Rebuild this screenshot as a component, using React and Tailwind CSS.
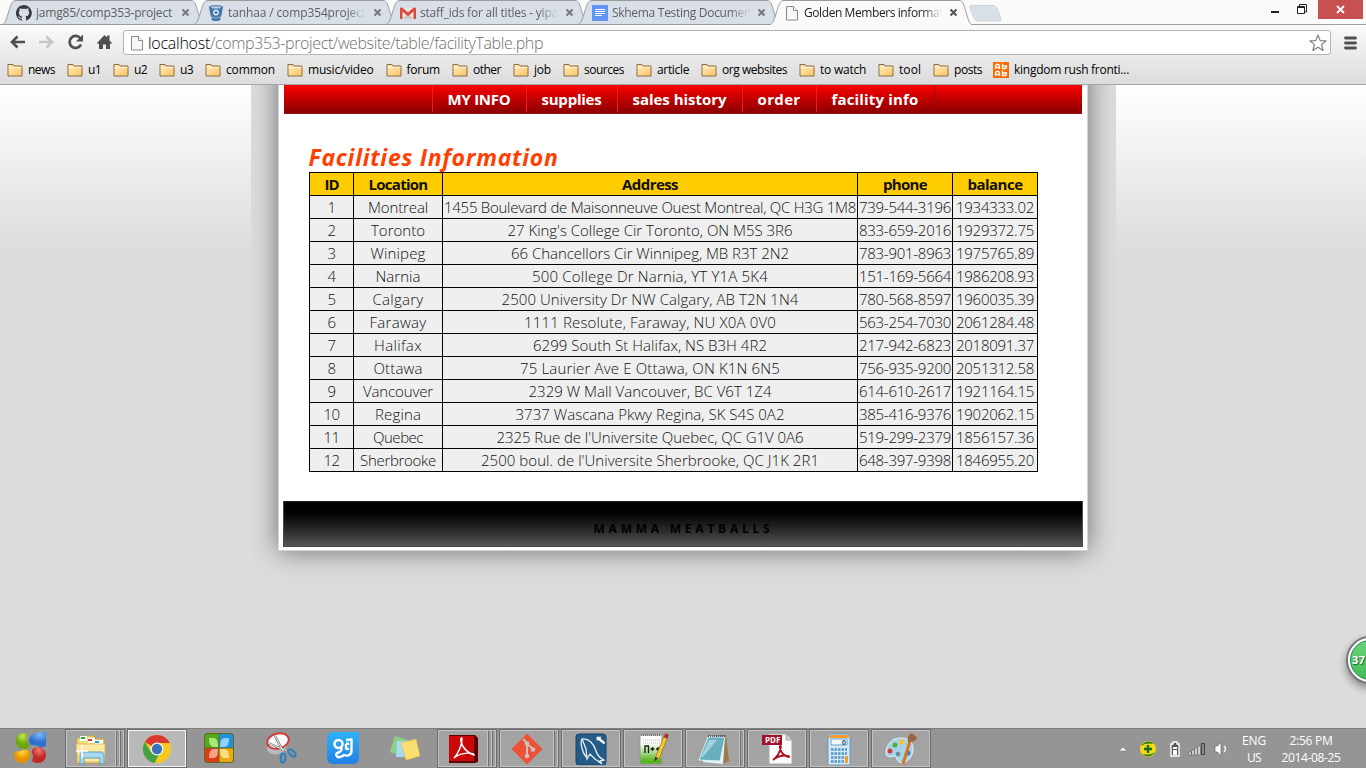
import React, { useLayoutEffect, useRef } from "react";

/* Text run tracked so that it fills a given advance width. */
function Fit({ w, className = "", children }) {
  const ref = useRef(null);
  useLayoutEffect(() => {
    const el = ref.current;
    el.style.letterSpacing = "0px";
    const natural = el.getBoundingClientRect().width;
    el.style.letterSpacing = (w - natural) / el.textContent.length + "px";
  }, [w, children]);
  return <span ref={ref} className={"inline-block whitespace-pre " + className}>{children}</span>;
}

/* ---------- browser icons ---------- */
const Github = () => (
  <svg className="size-4" viewBox="0 0 16 16"><path fill="#3a3a3c" d="M8 0C3.6 0 0 3.6 0 8c0 3.500 2.300 6.500 5.500 7.600.4.1.5-.2.5-.4v-1.400c-2.200.5-2.700-1-2.700-1-.4-.9-.9-1.200-.9-1.200-.7-.5.1-.5.1-.5.800.1 1.200.8 1.200.8.700 1.200 1.900.9 2.300.7.100-.5.300-.9.500-1.100-1.800-.2-3.600-.9-3.600-4 0-.9.300-1.600.8-2.100-.1-.2-.4-1 .1-2.100 0 0 .7-.2 2.200.8a7.500 7.500 0 0 1 4 0c1.500-1 2.200-.8 2.200-.8.400 1.100.2 1.900.1 2.100.5.600.8 1.300.8 2.100 0 3.100-1.900 3.700-3.700 3.900.3.300.6.800.6 1.500v2.200c0 .2.100.5.6.4A8 8 0 0 0 8 0z" /></svg>
);
const Bucket = () => (
  <svg className="size-4" viewBox="0 0 16 16"><path fill="#4377ac" d="M1 2.500C1 1 4 .3 8 .3s7 .7 7 2.200l-1.700 8.300C13 12 11 12.800 8 12.800S3 12 2.700 10.800z" /><path fill="#4377ac" d="M3.200 12.300c2.500 1.400 7.100 1.400 9.600 0l-.6 2.500c-.3.8-2 1.200-4.200 1.200s-3.900-.4-4.200-1.200z" /><ellipse cx="8" cy="2.400" rx="5" ry="1.100" fill="#b9cde0" /><circle cx="8" cy="7.500" r="2.900" fill="#e4edf5" /><circle cx="8" cy="7.500" r="1.500" fill="#4377ac" /></svg>
);
const Gmail = () => (
  <svg className="size-4" viewBox="0 0 16 16"><path fill="#e8e6e2" d="M1 3h14v11H1z" /><path fill="#cfcac0" d="m2.500 14 5.500-6 5.500 6z" /><path fill="#dc4a3d" d="M1 2.500c-.8.300-1 1-1 1.500v9c0 .6.400 1 1 1h1.500V6.600L8 11.200l5.500-4.600V14H15c.6 0 1-.4 1-1V4c0-.500-.2-1.200-1-1.500-.6-.2-1.200 0-1.500.3L8 7.500 2.500 2.800C2.200 2.500 1.600 2.300 1 2.500z" /></svg>
);
const Doc = () => (
  <svg className="size-4" viewBox="0 0 16 16"><rect width="16" height="16" rx="1" fill="#5f95f3" /><path stroke="#fff" d="M3 4.500h10M3 6.500h10M3 8.500h10M3 10.500h7" /></svg>
);
const Page = () => (
  <svg className="size-4" viewBox="0 0 16 16"><path fill="#f7f7f7" stroke="#8a8a8a" d="M2.500 1.500h7l4 4v9.500h-11z" /><path fill="#fff" stroke="#8a8a8a" d="M9.500 1.500v4h4" /></svg>
);

function Tab({ active, Icon, title, w, first }) {
  return (
    <div className={"relative h-[25px] w-[192px] shrink-0 " + (active ? "z-10" : "")}>
      <svg className="absolute left-0 top-0 h-[25px] w-[204px]" viewBox="0 0 204 25">
        <path d="M1 24.500C4 24 5 20 7 14S10 1.500 14 .5h176c4 0 5 5 7 11.500s3 12 6 12.500z" fill={active ? "#fafafa" : "#d9dfe7"} stroke="#9b9b9b" />
        {active && <path d="M2 24.500h200" stroke="#fafafa" strokeWidth="1.500" />}
      </svg>
      <div className="relative flex h-[25px] items-center pl-[15px]">
        <Icon />
        <div className={"ml-1 w-[140px] overflow-hidden text-[12px] leading-5 " + (first ? "" : "[mask-image:linear-gradient(to_right,#000_118px,transparent_138px)] ") + (active ? "text-[#222]" : "text-[#5c5f63]")}>
          <Fit w={w}>{title}</Fit>
        </div>
        <svg className="ml-[5px] size-[9px]" viewBox="0 0 9 9"><path d="m1.500 1.500 6 6m0-6-6 6" stroke={active ? "#555" : "#777"} strokeWidth="2" /></svg>
      </div>
    </div>
  );
}

function TabStrip() {
  return (
    <div className="relative flex h-[25px] bg-[#fafafa]">
      <div className="absolute bottom-0 h-px w-full bg-[#a0a0a0]" />
      <div className="flex pl-[1px]">
        <Tab Icon={Github} title="jamg85/comp353-project" w={136} first />
        <Tab Icon={Bucket} title="tanhaa / comp354project" w={138} />
        <Tab Icon={Gmail} title="staff_ids for all titles - yipa" w={138} />
        <Tab Icon={Doc} title="Skhema Testing Documen" w={139} />
        <Tab Icon={Page} title="Golden Members informat" w={139} active />
      </div>
      <svg className="mt-1 ml-[6px] h-[18px] w-[36px]" viewBox="0 0 36 18"><path d="M4 1.500h22c2 0 3 1 4 3l4 10c.6 1.600 0 2.500-2 2.500H11c-2 0-3-1-4-3L3 4c-.5-1.500-.5-2.500 1-2.500z" fill="#d9dfe7" stroke="#d0d3d8" /></svg>
      <div className="ml-auto flex h-[19px] items-stretch">
        <svg className="mr-[8px] h-[19px] w-[40px]" viewBox="0 0 40 19"><path d="M1 12h8" stroke="#222" strokeWidth="2" /><path d="M27.500 6.500h7v7h-7zM27 7.500h8M29.500 6V4.500h7v7.500H35" fill="none" stroke="#222" /></svg>
        <div className="flex w-[45px] items-center justify-center bg-[#c75050]">
          <svg className="size-[9px]" viewBox="0 0 9 9"><path d="m1 1 7 7m0-7L1 8" stroke="#fff" strokeWidth="1.800" /></svg>
        </div>
        <div className="w-[3px]" />
      </div>
    </div>
  );
}

function AddressBar() {
  return (
    <div className="flex h-[32px] items-center pt-[3px]">
      <svg className="-mt-px h-[20px] w-[123px] shrink-0" viewBox="0 0 123 20">
        <path d="M25 10H12m5.500-5.500L12 10l5.500 5.500" fill="none" stroke="#505050" strokeWidth="2.600" />
        <path d="M39 10h13m-5.500-5.500L52 10l-5.500 5.500" fill="none" stroke="#c6c6c6" strokeWidth="2.600" />
        <path d="M80.500 6.500A6 6 0 1 0 81 12.500" fill="none" stroke="#505050" strokeWidth="2.700" /><path d="M83 2.500v7h-7z" fill="#505050" />
        <path fill="#505050" d="m97 11 7.500-8 2.500 2.600V3.500h2.500v5L112 11l-1 1-1-.8V17h-4v-4.500h-3V17h-4v-5.800l-1 .8z" />
      </svg>
      <div className="flex h-[25px] w-[1208px] items-center rounded-[3px] border border-[#b4b4b4] bg-white pl-[5px]">
        <Page />
        <div className="ml-[3px] text-[16px] leading-6 font-light text-[#707070]">
          <Fit w={62} className="text-black">localhost</Fit><Fit w={333}>/comp353-project/website/table/facilityTable.php</Fit>
        </div>
        <svg className="mr-[3px] ml-auto size-[18px]" viewBox="0 0 18 18"><path d="m9 1 2.200 5.600 5.900.3-4.600 3.700 1.600 5.900L9 13.300l-5.100 3.200 1.600-5.900L.9 6.900l5.900-.3z" fill="#fff" stroke="#777" strokeWidth="1.100" strokeLinejoin="round" /></svg>
      </div>
      <svg className="ml-[13px] h-[14px] w-[13px]" viewBox="0 0 13 14"><path d="M1.500 2h10m-10 5h10m-10 5h10" stroke="#505050" strokeWidth="2.800" strokeLinecap="round" /></svg>
    </div>
  );
}

const Folder = () => (
  <svg className="h-[14px] w-4" viewBox="0 0 16 14">
    <defs><linearGradient id="fold" x2="1" y2="1"><stop stopColor="#ffedbd" /><stop offset="1" stopColor="#fbc567" /></linearGradient></defs>
    <path d="M1 3V1.500h5L7 3h8v10H1z" fill="url(#fold)" stroke="#8d6b42" strokeLinejoin="round" /><path d="M1.500 4.500h13" stroke="#fff3cf" />
  </svg>
);
const bookmarks = [["news", 27], ["u1", 13], ["u2", 13], ["u3", 13], ["common", 49], ["music/video", 65.5], ["forum", 33.5], ["other", 28], ["job", 17], ["sources", 40], ["article", 32], ["org websites", 65], ["to watch", 46], ["tool", 22], ["posts", 28]];

function Bookmarks() {
  return (
    <div className="flex h-[25px] items-center gap-3 pl-[7px] text-[12px] leading-4 text-black">
      {bookmarks.map(([name, w]) => (
        <div key={name} className="flex items-center gap-[5px]"><Folder /><Fit w={w}>{name}</Fit></div>
      ))}
      <div className="-ml-px flex items-center gap-[5px]">
        <svg className="size-4" viewBox="0 0 16 16"><rect width="16" height="16" fill="#fd6a02" /><path d="M2.500 7V3.500l1-1h2l1 1V7M3 5.500h3M9.500 1.500V6.500h3l1-1V4h-4M2.500 14v-3.500l1-1h2l1 1V14M3 12.500h3M9.500 8.500v5h3l1-1V11h-4" fill="none" stroke="#fff" strokeWidth="1.300" /></svg>
        <Fit w={115}>kingdom rush fronti...</Fit>
      </div>
    </div>
  );
}

/* ---------- web page ---------- */
const menu = [["MY INFO", 63, "w-[94px]"], ["supplies", 60, "w-[91px]"], ["sales history", 94, "w-[125px]"], ["order", 43, "w-[74px]"], ["facility info", 87, "w-[119px]"]];

const rows = [
  ["Montreal", 60, "1455 Boulevard de Maisonneuve Ouest Montreal, QC H3G 1M8", 412, "739-544-3196", "1934333.02"],
  ["Toronto", 54, "27 King's College Cir Toronto, ON M5S 3R6", 285, "833-659-2016", "1929372.75"],
  ["Winipeg", 55, "66 Chancellors Cir Winnipeg, MB R3T 2N2", 278, "783-901-8963", "1975765.89"],
  ["Narnia", 45, "500 College Dr Narnia, YT Y1A 5K4", 236, "151-169-5664", "1986208.93"],
  ["Calgary", 51, "2500 University Dr NW Calgary, AB T2N 1N4", 297, "780-568-8597", "1960035.39"],
  ["Faraway", 57, "1111 Resolute, Faraway, NU X0A 0V0", 252, "563-254-7030", "2061284.48"],
  ["Halifax", 48, "6299 South St Halifax, NS B3H 4R2", 234, "217-942-6823", "2018091.37"],
  ["Ottawa", 49, "75 Laurier Ave E Ottawa, ON K1N 6N5", 260, "756-935-9200", "2051312.58"],
  ["Vancouver", 70, "2329 W Mall Vancouver, BC V6T 1Z4", 243, "614-610-2617", "1921164.15"],
  ["Regina", 46, "3737 Wascana Pkwy Regina, SK S4S 0A2", 269, "385-416-9376", "1902062.15"],
  ["Quebec", 50, "2325 Rue de l'Universite Quebec, QC G1V 0A6", 307, "519-299-2379", "1856157.36"],
  ["Sherbrooke", 76, "2500 boul. de l'Universite Sherbrooke, QC J1K 2R1", 338, "648-397-9398", "1846955.20"],
];

const Cell = ({ children, w, head }) => (
  <div className={"flex h-[23px] items-center justify-center border-r border-b border-black pl-px leading-[22px] " + (head ? "bg-[#ffcc00] font-bold" : "bg-[#efefef] font-light")}>
    <Fit w={w}>{children}</Fit>
  </div>
);

function FacilityTable() {
  return (
    <div className="grid w-[729px] grid-cols-[44px_89px_415px_95px_85px] border-t border-l border-black text-[15px] text-[#111]">
      <Cell head w={14}>ID</Cell><Cell head w={59}>Location</Cell><Cell head w={56}>Address</Cell><Cell head w={44}>phone</Cell><Cell head w={55}>balance</Cell>
      {rows.map((r, i) => (
        <React.Fragment key={r[0]}>
          <Cell w={i < 9 ? 8 : 16}>{String(i + 1)}</Cell>
          <Cell w={r[1]}>{r[0]}</Cell>
          <Cell w={r[3]}>{r[2]}</Cell>
          <Cell w={92}>{r[4]}</Cell>
          <Cell w={78}>{r[5]}</Cell>
        </React.Fragment>
      ))}
    </div>
  );
}

function WebPage() {
  return (
    <main className="relative flex h-[643px] justify-center overflow-hidden bg-[#dcdcdc] bg-[linear-gradient(#fff,#dcdcdc)] bg-[length:100%_166px] bg-no-repeat">
      <div className="h-full w-[865px] overflow-hidden bg-[#dcdcdc] pl-[27px]">
        <div className="-mt-5 h-[486px] w-[810px] border border-[#d5d5d5] bg-white px-[5px] pt-[19px] shadow-[0_0_25px_rgba(0,0,0,0.5)]">
          <nav className="flex h-[29px] w-[798px] border-b border-[#a0101a] bg-gradient-to-b from-[#fb0000] to-[#8b0000] pl-[148px] text-[15px] font-bold text-white">
            {menu.map(([name, w, width], i) => (
              <div key={name} className={"flex h-[27px] shrink-0 items-center border-l border-[#ee1c1c] pt-[2px] pl-[15px] " + width + (i === 4 ? " border-r border-r-[#a00000]" : "")}>
                <Fit w={w}>{name}</Fit>
              </div>
            ))}
          </nav>
          <section className="h-[387px] pt-[29px] pl-[25px]">
            <h1 className="mb-px h-[28px] text-[23px] leading-[28px] font-bold text-[#ff4000] italic"><Fit w={250}>Facilities Information</Fit></h1>
            <FacilityTable />
          </section>
          <footer className="-ml-px flex h-[46px] w-[800px] items-center justify-center border border-[#4a4a4a] border-t-[#222] bg-gradient-to-b from-black to-[#555] pt-[9px] pl-[2px] text-[12px] font-bold text-black">
            <Fit w={180}>MAMMA MEATBALLS</Fit>
          </footer>
        </div>
      </div>
      <div className="absolute top-[551px] left-[1346px] flex size-[48px] items-center rounded-full border-2 border-[#777] bg-white p-[2px] shadow-[0_4px_9px_rgba(0,0,0,0.4)]">
        <div className="flex size-full items-center rounded-full border border-[#228850] bg-gradient-to-b from-[#68d37a] to-[#42bd58] pl-px text-[11px] font-bold text-white [text-shadow:1px_1px_1px_#206030]"><Fit w={13}>37</Fit></div>
      </div>
    </main>
  );
}

/* ---------- taskbar ---------- */
const S = ({ children, className = "size-8" }) => <svg className={className} viewBox="0 0 32 32">{children}</svg>;

const Start = () => (
  <S>
    <defs>
      <radialGradient id="sg" cx=".5" cy=".2"><stop stopColor="#c5ea4a" /><stop offset="1" stopColor="#6da60d" /></radialGradient>
      <radialGradient id="sb" cx=".5" cy=".2"><stop stopColor="#7db8f7" /><stop offset="1" stopColor="#2d70cd" /></radialGradient>
      <radialGradient id="sy" cx=".5" cy=".2"><stop stopColor="#ffd840" /><stop offset="1" stopColor="#e79300" /></radialGradient>
      <radialGradient id="sr" cx=".5" cy=".2"><stop stopColor="#ee7a70" /><stop offset="1" stopColor="#bf2a28" /></radialGradient>
    </defs>
    <path d="M10 1a8 8 0 1 0 5 14c1-1 0-2-1-4s-2-5-1-8c1-2-1-2-3-2z" fill="url(#sg)" />
    <path d="M23 1a8 8 0 1 1 6 14c-2 1-3 1-5-1-2-1-5-1-7-1-2-1-2-3-2-5 1-4 4-7 8-7z" fill="url(#sb)" />
    <path d="M2 19c3 1 5 0 7-1s6-1 7 2c1 6-3 11-8 11-5 0-8-4-8-8 0-3 1-4 2-4z" fill="url(#sy)" />
    <path d="M24 15c5 0 8 4 8 8 0 5-4 8-8 8-3 0-6-1-6-3 2-3 1-5 0-7s1-6 6-6z" fill="url(#sr)" />
  </S>
);
const Explorer = () => (
  <S><path d="M2 5h8l1-2h8l1 3h9v24H2z" fill="#f7d978" stroke="#c8a44a" /><path d="M5 3h7v5H5zM13 5h7v5h-7zM20 7h8v5h-8z" fill="#fff" /><path d="M6 4h4v2H6z" fill="#2a3" /><path d="M13 6h4v2h-4z" fill="#d33" /><path d="M20 8h4v2h-4z" fill="#29d" /><path d="M1 11h29v18H3z" fill="#fae99f" stroke="#d3b45c" strokeWidth=".7" /><path d="M5 31V22c0-2 1-3 3-3h18c2 0 3 1 3 3v9h-4v-6H9v6z" fill="#a6daf0" stroke="#5e9dbe" /><path d="M7 12v13M1 18h12" stroke="#fff" strokeWidth="1.500" /></S>
);
const Chrome = () => (
  <S className="size-[30px]"><circle cx="16" cy="16" r="15" fill="#f7c81e" /><path d="M16 16 3 8.500A15 15 0 0 1 29.500 9.500H16z" fill="#d8382f" /><path d="m3 8.500 6.500 11 8 3.500-4 8A15 15 0 0 1 3 8.500z" fill="#45a147" /><circle cx="16" cy="16" r="6.900" fill="#f5f5f5" /><circle cx="16" cy="16" r="5.500" fill="#3773b8" /></S>
);
const Tiles = () => (
  <S><rect x="1" y="1" width="30" height="30" rx="4" fill="#5d6b22" /><path d="M2 5c0-2 1-3 3-3h10.500v13.500H2z" fill="#55a81c" /><path d="M16.500 2H27c2 0 3 1 3 3v10.500H16.500z" fill="#2291dd" /><path d="M2 16.500h13.500V30H5c-2 0-3-1-3-3z" fill="#df3a18" /><path d="M16.500 16.500H30V27c0 2-1 3-3 3H16.500z" fill="#eda710" /><path d="M6 6h4c4 0 5 3 5 9h-4c-4 0-5-4-5-9z" fill="#a8e878" /><path d="M26 6h-4c-4 0-5 3-5 9h4c4 0 5-4 5-9z" fill="#8fd2fb" /><path d="M6 26h4c4 0 5-3 5-9h-4c-4 0-5 4-5 9z" fill="#f9a088" /><path d="M26 26h-4c-4 0-5-3-5-9h4c4 0 5 4 5 9z" fill="#fbdd80" /></S>
);
const Snip = () => (
  <S><ellipse cx="12" cy="15" rx="10" ry="7" fill="#bbb" transform="rotate(-20 12 15)" /><ellipse cx="13" cy="9" rx="11" ry="7.500" fill="#fafafa" stroke="#d33b3b" strokeWidth="2" transform="rotate(-15 13 9)" /><path d="m10 4 9 17M3 11l19 8" stroke="#777" strokeWidth="2.400" /><path d="m10 4 9 17M3 11l19 8" stroke="#eee" /><ellipse cx="18" cy="26" rx="2.300" ry="4.500" fill="none" stroke="#2e80ba" strokeWidth="2.200" transform="rotate(5 18 26)" /><ellipse cx="27" cy="21" rx="2.300" ry="4.500" fill="none" stroke="#2e80ba" strokeWidth="2.200" transform="rotate(-45 27 21)" /></S>
);
const BlueApp = () => (
  <S><defs><linearGradient id="ba" x2="0" y2="1"><stop stopColor="#2fb0f7" /><stop offset="1" stopColor="#2380e6" /></linearGradient></defs><path d="M7 0h25v25c0 5-2 7-7 7H7c-5 0-7-2-7-7V7c0-5 2-7 7-7z" fill="url(#ba)" /><circle cx="11.500" cy="12" r="4" fill="none" stroke="#fff" strokeWidth="2.600" /><path d="M14 15.500c1.500 2 .5 3-1.500 4.500-3 1-4.500 2-2.500 4.500 2 1.500 5 0 7-1.500 5 2 8-1 7.500-6V7.500l-5.500.5M19 12l3-.5M19 12v4c0 1 1.500 1.500 3 .5" fill="none" stroke="#fff" strokeWidth="2.400" strokeLinejoin="round" /></S>
);
const Notes = () => (
  <S><path d="m6 4 13 4-4 17-14-5z" fill="#8bd186" /><path d="M8 9h13v16H7z" fill="#a6dbf8" /><path d="m12 11 15-4 4 17-14 4z" fill="#f8df70" stroke="#e3be43" strokeWidth=".6" /></S>
);
const Adobe = () => (
  <S><path d="M2 2h26l3 3v24l-3 1H2z" fill="#590304" /><path d="M2 3h25v25H2z" fill="#cb0808" /><path d="M7 25c4-4 8-13 8-19 0-2-2-1-1 2 1 7 7 12 13 14 1-2-12-4-20 3z" fill="none" stroke="#fff" strokeWidth="1.500" /></S>
);
const Git = () => (
  <S><path d="m16 1 15 15-15 15L1 16z" fill="#ee5136" stroke="#ee5136" strokeLinejoin="round" /><path d="m12 6 4 4v14m0-13 6 5" fill="none" stroke="#c9c4c2" strokeWidth="2" /><circle cx="16" cy="10.500" r="2.300" fill="#c9c4c2" /><circle cx="22" cy="16.500" r="2.300" fill="#c9c4c2" /><circle cx="16" cy="23" r="2.300" fill="#c9c4c2" /></S>
);
const Mysql = () => (
  <S><rect x="1" y="1" width="30" height="31" rx="3" fill="#245b87" stroke="#174267" /><path d="M11 24C7 19 5 9 7 6c7-1 12 5 14 12 1 4 4 7 8 9l-4 1 2 3M7 6l4 10 1 10 3-5 5 5 7 5" fill="none" stroke="#e4eef6" strokeWidth="1.300" /><path d="m24 6 4 3M22 4l2 2M28 9l1.500 1.500" stroke="#fff" strokeWidth="2.400" fill="none" /><path d="M25 3.500v3h-3.500" stroke="#fff" strokeWidth="1.500" fill="none" /></S>
);
const Npp = () => (
  <S><defs><linearGradient id="np" x2="0" y2="1"><stop offset=".3" stopColor="#fff" /><stop offset=".9" stopColor="#55b41c" /></linearGradient></defs><path d="M3 2h22v29H3z" fill="url(#np)" stroke="#9a9a9a" /><path d="M4 2h20" stroke="#777" strokeWidth="2" strokeDasharray="1 1" /><path d="M6 7h17M6 10h17" stroke="#bbb" strokeDasharray="1 1" /><path d="M8 20v-7h3.500v7M13.500 16h4m-2-2v4M19 16h4m-2-2v4" fill="none" stroke="#142814" strokeWidth="1.400" /><path d="M29 3 20 26" stroke="#a77c13" strokeWidth="4.500" /><path d="M29 3 20 26" stroke="#f5c936" strokeWidth="3" /><path d="m30 1-1.500 4" stroke="#a33" strokeWidth="4" /><path d="m18 24 3.500 1-4 3.500z" fill="#333" /></S>
);
const Notepad = () => (
  <S><path d="m11 3 18-1 3 26-6 3z" fill="#9b7b4d" /><path d="m11 3 17 1-2 27-20-2z" fill="#eaf4f5" /><path d="M11 4h17l-5 24-21-1z" fill="#69afbd" stroke="#d1f2f5" /><path d="m12 7 8 0-14 17H4z" fill="#b8e4e9" opacity=".7" /><path d="M11 3h17" stroke="#555" strokeWidth="2" strokeDasharray="1 1" /></S>
);
const Calc = () => (
  <S><rect x="5" y="1" width="22" height="31" rx="1" fill="#d6e8f5" stroke="#5d9ac7" /><path d="M6 2h20v3H6z" fill="#f79b2e" /><path d="M8 6h16v6H8z" fill="#f3f9fc" stroke="#6ca4c7" /><text x="19" y="12" fontSize="7" fill="#246" fontFamily="Liberation Sans" fontWeight="700">0</text><path d="M8 16.500h16M8 20.500h16M8 24.500h16M8 28.500h16" stroke="#5397c7" strokeWidth="2.500" strokeDasharray="2.500 1" /><path d="M22 23h3v7h-3z" fill="#f79b2e" /></S>
);
const Paint = () => (
  <S><path d="M17 5C7 4 1 12 1 20c0 5 5 4 8 3 3 0 2 4 5 6 6 3 14-4 14-13 0-7-4-11-11-11z" fill="#a5d3e9" stroke="#e2f4fc" /><circle cx="5" cy="18" r="2.500" fill="#d94034" /><circle cx="10" cy="12" r="2.500" fill="#59ac37" /><circle cx="17" cy="9" r="2.700" fill="#f2c43a" /><circle cx="13" cy="21" r="2.300" fill="#6b8aa5" /><circle cx="23" cy="20" r="2.500" fill="#417ed0" /><path d="m25 8-7 23" stroke="#d8741c" strokeWidth="3" /><path d="M23 8c-1-4 1-6 4-8 2 3 4 2 5 5-2 3-4 4-8 4z" fill="#9c6540" /></S>
);
const Pdf = () => (
  <div className="relative size-8">
    <S className="absolute inset-0 size-8"><path d="M8 1h17l6 6v24H8z" fill="#fafafa" stroke="#aaa" /><path d="M25 1v6h6" fill="#ccc" stroke="#aaa" /><path d="M12 27c4-3 7-8 8-13 0-2-2-1-1 1 1 5 4 8 9 9 1-2-9-3-16 3z" fill="none" stroke="#a91220" strokeWidth="1.800" /><path d="M1 2h20v10H1z" fill="#a3102a" /></S>
    <span className="absolute top-[2px] left-[4px] text-[8px] leading-[10px] font-bold text-white">PDF</span>
  </div>
);

function Task({ Icon, kind, stack = 0 }) {
  if (!kind) return <div className="flex w-[62px] items-center justify-center pb-px"><Icon /></div>;
  const skin = kind === "active" ? "border-[#f4f4f4] bg-[#b9b9b9]" : "border-[#c4c4c4] bg-[#a3a3a3]";
  return (
    <div className="flex w-[62px] px-px">
      <div className="flex flex-1 border border-[#6c6c6c]">
        <div className={"flex flex-1 items-center justify-center border " + skin}><Icon /></div>
        {stack > 0 && <div className="w-1 border-y border-r border-l border-[#c4c4c4] border-l-[#707070] bg-[#9c9c9c]" />}
        {stack > 1 && <div className="w-1 border-y border-r border-l border-[#c4c4c4] border-l-[#707070] bg-[#9c9c9c]" />}
      </div>
    </div>
  );
}

function Taskbar() {
  return (
    <div className="flex h-10 border-t border-[#808080] bg-[#959595] text-white">
      <div className="flex w-[64px] items-center pb-px pl-[14px]"><Start /></div>
      <Task Icon={Explorer} kind="open" stack={2} />
      <Task Icon={Chrome} kind="active" />
      <Task Icon={Tiles} /><Task Icon={Snip} /><Task Icon={BlueApp} /><Task Icon={Notes} />
      <Task Icon={Adobe} kind="open" stack={2} />
      <Task Icon={Git} kind="open" stack={1} />
      <Task Icon={Mysql} kind="open" />
      <Task Icon={Npp} kind="open" />
      <Task Icon={Notepad} kind="open" stack={1} />
      <Task Icon={Pdf} kind="open" />
      <Task Icon={Calc} kind="open" />
      <Task Icon={Paint} kind="open" />
      <div className="ml-auto flex items-center pt-px">
        <svg className="h-[20px] w-[112px]" viewBox="0 0 112 20">
          <path d="m0 12 4-4 4 4z" fill="#fff" stroke="#777" strokeWidth=".6" />
          <circle cx="29" cy="10" r="8" fill="#f5d913" /><path d="M22 7c3-5 9-6 13-2-4-1-9-1-13 2zM36 13c-3 5-9 6-13 2 4 1 9 1 13-2z" fill="#277d20" /><path d="M29 6v8m-4-4h8" stroke="#17691b" strokeWidth="2.400" />
          <path d="M52 5h2V3h4v2h2v12h-8z" fill="#555" stroke="#fff" strokeWidth="1.400" /><path d="M54 8h4v2h-4zM54 11h4v5h-4z" fill="#fff" />
          <path d="M70 13h2v3h-2zM73 11h2v5h-2zM76 9h2v7h-2zM79 7h2v9h-2z" fill="#fff" stroke="#444" strokeWidth=".5" /><path d="M82.500 4.500h3v11h-3z" fill="#888" stroke="#444" />
          <path d="M96 7h2.500L102 3v14l-3.500-4H96z" fill="#fff" stroke="#555" strokeWidth=".6" /><path d="M105 7c2 2 2 4 0 6" fill="none" stroke="#fff" strokeWidth="1.300" />
        </svg>
        <div className="ml-[2px] flex w-[42px] flex-col items-center text-[12px] leading-[17px]"><Fit w={24}>ENG</Fit><Fit w={14}>US</Fit></div>
        <div className="mr-[20px] ml-px flex w-[70px] flex-col items-center text-[12px] leading-[17px]"><Fit w={43}>2:56 PM</Fit><Fit w={59}>2014-08-25</Fit></div>
      </div>
    </div>
  );
}

export default function App() {
  return (
    <div className="flex h-[768px] w-[1366px] flex-col overflow-hidden font-['Open_Sans','Noto_Sans',sans-serif]">
      <header className="h-[85px] shrink-0 border-b border-[#a5a5a5] bg-gradient-to-b from-[#fafafa] from-30% to-[#dcdcdc]">
        <TabStrip />
        <AddressBar />
        <Bookmarks />
      </header>
      <WebPage />
      <Taskbar />
    </div>
  );
}
